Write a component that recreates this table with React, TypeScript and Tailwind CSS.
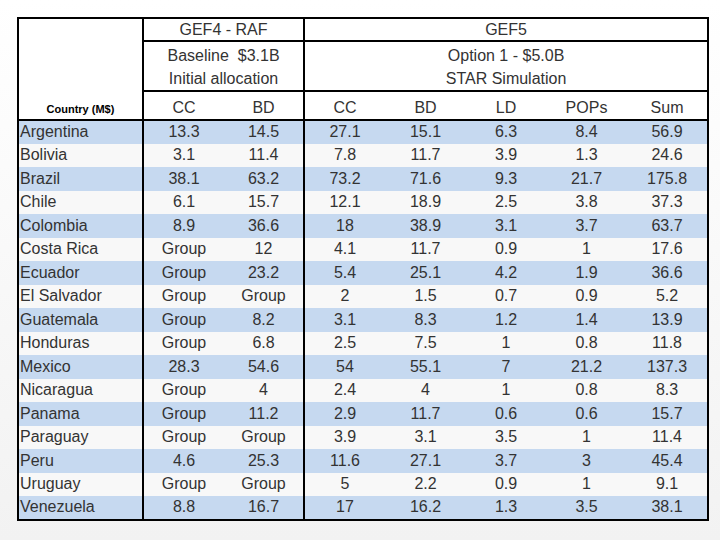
import React from "react";

const rows: string[][] = [
  ["Argentina", "13.3", "14.5", "27.1", "15.1", "6.3", "8.4", "56.9"],
  ["Bolivia", "3.1", "11.4", "7.8", "11.7", "3.9", "1.3", "24.6"],
  ["Brazil", "38.1", "63.2", "73.2", "71.6", "9.3", "21.7", "175.8"],
  ["Chile", "6.1", "15.7", "12.1", "18.9", "2.5", "3.8", "37.3"],
  ["Colombia", "8.9", "36.6", "18", "38.9", "3.1", "3.7", "63.7"],
  ["Costa Rica", "Group", "12", "4.1", "11.7", "0.9", "1", "17.6"],
  ["Ecuador", "Group", "23.2", "5.4", "25.1", "4.2", "1.9", "36.6"],
  ["El Salvador", "Group", "Group", "2", "1.5", "0.7", "0.9", "5.2"],
  ["Guatemala", "Group", "8.2", "3.1", "8.3", "1.2", "1.4", "13.9"],
  ["Honduras", "Group", "6.8", "2.5", "7.5", "1", "0.8", "11.8"],
  ["Mexico", "28.3", "54.6", "54", "55.1", "7", "21.2", "137.3"],
  ["Nicaragua", "Group", "4", "2.4", "4", "1", "0.8", "8.3"],
  ["Panama", "Group", "11.2", "2.9", "11.7", "0.6", "0.6", "15.7"],
  ["Paraguay", "Group", "Group", "3.9", "3.1", "3.5", "1", "11.4"],
  ["Peru", "4.6", "25.3", "11.6", "27.1", "3.7", "3", "45.4"],
  ["Uruguay", "Group", "Group", "5", "2.2", "0.9", "1", "9.1"],
  ["Venezuela", "8.8", "16.7", "17", "16.2", "1.3", "3.5", "38.1"],
];

export default function App() {
  return (
    <div
      className="w-[720px] h-[540px] bg-linear-to-b from-white to-[#f2f2f2] pt-[17px] pl-[17px] text-[#333333]"
      style={{ fontFamily: '"Liberation Sans", Arial, sans-serif' }}
    >
      <table className="table-fixed border-collapse border-2 border-black w-[690px] text-[16px] leading-none">
        <colgroup>
          <col className="w-[125px]" />
          <col className="w-[81px]" />
          <col className="w-[80px]" />
          <col className="w-[81px]" />
          <col className="w-[81px]" />
          <col className="w-[80px]" />
          <col className="w-[81px]" />
          <col className="w-[81px]" />
        </colgroup>
        <thead className="bg-white">
          <tr className="h-[23px]">
            <th
              rowSpan={3}
              className="border-2 border-black align-bottom pb-[4px] text-[11px] font-bold text-black"
            >
              Country (M$)
            </th>
            <th colSpan={2} className="border-2 border-black font-normal">
              GEF4 - RAF
            </th>
            <th colSpan={5} className="border-2 border-black font-normal">
              GEF5
            </th>
          </tr>
          <tr>
            <th colSpan={2} className="border-2 border-black font-normal pt-[2px]">
              <div className="whitespace-pre leading-[23px]">Baseline  $3.1B</div>
              <div className="leading-[23px]">Initial allocation</div>
            </th>
            <th colSpan={5} className="border-2 border-black font-normal pt-[2px]">
              <div className="leading-[23px]">Option 1 - $5.0B</div>
              <div className="leading-[23px]">STAR Simulation</div>
            </th>
          </tr>
          <tr className="h-[29px] border-b-2 border-black">
            <th className="font-normal align-bottom pb-[3px]">CC</th>
            <th className="font-normal align-bottom pb-[3px] border-r-2 border-black">BD</th>
            <th className="font-normal align-bottom pb-[3px]">CC</th>
            <th className="font-normal align-bottom pb-[3px]">BD</th>
            <th className="font-normal align-bottom pb-[3px]">LD</th>
            <th className="font-normal align-bottom pb-[3px]">POPs</th>
            <th className="font-normal align-bottom pb-[3px]">Sum</th>
          </tr>
        </thead>
        <tbody>
          {rows.map((r, i) => (
            <tr
              key={r[0]}
              className={`h-[23.5px] ${i % 2 === 0 ? "bg-[#c6d9f0]" : "bg-[#f8f8f8]"}`}
            >
              <td className="border-r-2 border-black text-left pl-[1px]">{r[0]}</td>
              {r.slice(1).map((v, j) => (
                <td
                  key={j}
                  className={`text-center ${j === 1 ? "border-r-2 border-black" : ""}`}
                >
                  {v}
                </td>
              ))}
            </tr>
          ))}
        </tbody>
      </table>
    </div>
  );
}
